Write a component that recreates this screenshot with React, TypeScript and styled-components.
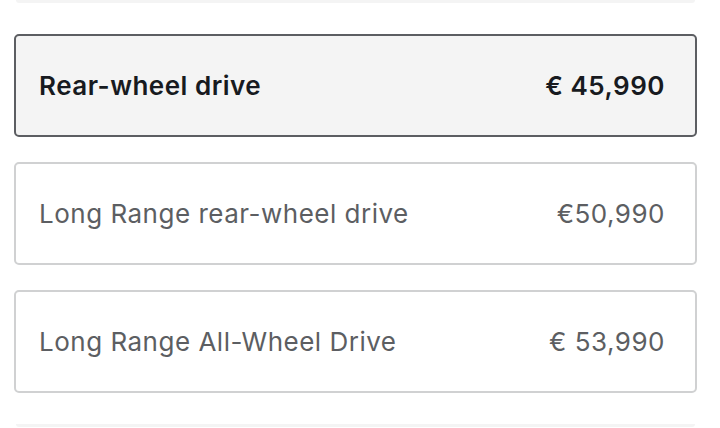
import styled, { createGlobalStyle } from "styled-components";

const trims = [
  { name: "Rear-wheel drive", price: "€ 45,990", selected: true },
  { name: "Long Range rear-wheel drive", price: "€50,990", selected: false },
  { name: "Long Range All-Wheel Drive", price: "€ 53,990", selected: false },
];

function App() {
  return (
    <>
      <GlobalStyle />
      <Page>
        <Edge />
        <List>
          {trims.map((trim) => (
            <Option key={trim.name} selected={trim.selected}>
              <Name selected={trim.selected}>{trim.name}</Name>
              <Price selected={trim.selected}>{trim.price}</Price>
            </Option>
          ))}
        </List>
        <Edge />
      </Page>
    </>
  );
}

const GlobalStyle = createGlobalStyle`
  body {
    margin: 0;
    background: #fff;
    font-family: Inter, "Noto Sans", sans-serif;
    overflow: hidden;
  }
`;

const Page = styled.div`
  display: flex;
  flex-direction: column;
  gap: 31px;
  padding: 0 23px 0 14px;
  height: 428px;
  box-sizing: border-box;
`;

const Edge = styled.div`
  height: 3px;
  margin: 0 2px;
  background-color: #f4f4f4;
  border-radius: 0 0 4px 4px;
`;

const List = styled.div`
  display: flex;
  flex-direction: column;
  gap: 25px;
`;

const Option = styled.div<{ selected: boolean }>`
  display: flex;
  align-items: center;
  justify-content: space-between;
  height: 103px;
  box-sizing: border-box;
  padding: 0 30px 0 23px;
  border-radius: 5px;
  border: 2px solid ${(p) => (p.selected ? "#5c5e62" : "#d0d1d2")};
  background-color: ${(p) => (p.selected ? "#f4f4f4" : "#fff")};
`;

const Name = styled.span<{ selected: boolean }>`
  font-size: 26px;
  letter-spacing: 0.5px;
  font-weight: ${(p) => (p.selected ? 600 : 400)};
  color: ${(p) => (p.selected ? "#171a20" : "#5c5e62")};
`;

const Price = styled(Name)``;

export default App;
